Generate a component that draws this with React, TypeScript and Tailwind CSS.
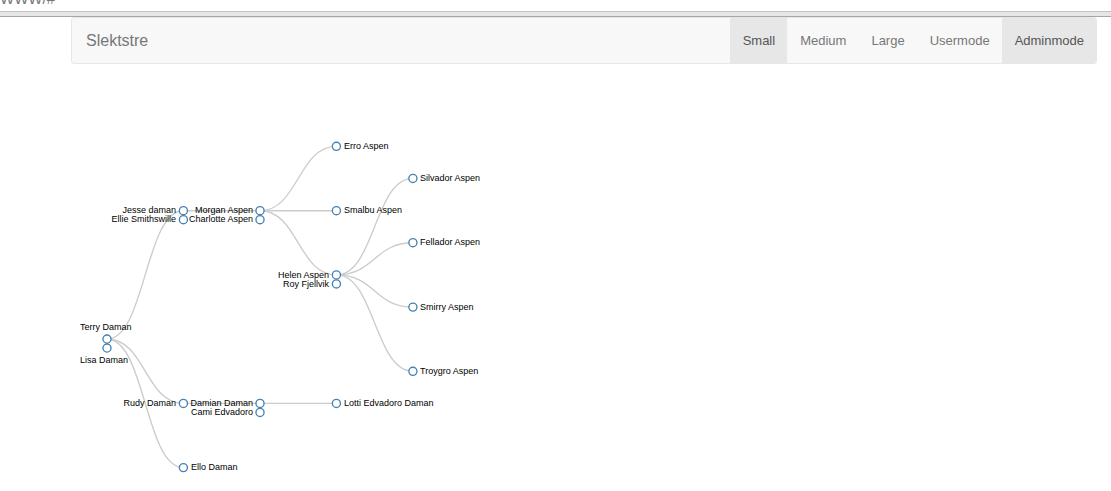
import { useState } from 'react';

type Person = {
  name: string;
  x: number;
  y: number;
  label: 'left' | 'right' | 'above' | 'below';
};

const people: Person[] = [
  { name: 'Terry Daman', x: 107, y: 339, label: 'above' },
  { name: 'Lisa Daman', x: 107, y: 348, label: 'below' },
  { name: 'Jesse daman', x: 183.4, y: 210.7, label: 'left' },
  { name: 'Ellie Smithswille', x: 183.4, y: 219.7, label: 'left' },
  { name: 'Rudy Daman', x: 183.4, y: 403.4, label: 'left' },
  { name: 'Ello Daman', x: 183.4, y: 467.6, label: 'right' },
  { name: 'Morgan Aspen', x: 260, y: 210.7, label: 'left' },
  { name: 'Charlotte Aspen', x: 260, y: 219.7, label: 'left' },
  { name: 'Damian Daman', x: 260, y: 403.4, label: 'left' },
  { name: 'Cami Edvadoro', x: 260, y: 412.4, label: 'left' },
  { name: 'Erro Aspen', x: 336.4, y: 146.3, label: 'right' },
  { name: 'Smalbu Aspen', x: 336.4, y: 210.7, label: 'right' },
  { name: 'Helen Aspen', x: 336.4, y: 274.9, label: 'left' },
  { name: 'Roy Fjellvik', x: 336.4, y: 283.9, label: 'left' },
  { name: 'Lotti Edvadoro Daman', x: 336.4, y: 403.4, label: 'right' },
  { name: 'Silvador Aspen', x: 412.9, y: 178.4, label: 'right' },
  { name: 'Fellador Aspen', x: 412.9, y: 242.7, label: 'right' },
  { name: 'Smirry Aspen', x: 412.9, y: 307.1, label: 'right' },
  { name: 'Troygro Aspen', x: 412.9, y: 371.3, label: 'right' },
];

const links: [string, string][] = [
  ['Terry Daman', 'Jesse daman'],
  ['Terry Daman', 'Rudy Daman'],
  ['Terry Daman', 'Ello Daman'],
  ['Jesse daman', 'Morgan Aspen'],
  ['Rudy Daman', 'Damian Daman'],
  ['Damian Daman', 'Lotti Edvadoro Daman'],
  ['Morgan Aspen', 'Erro Aspen'],
  ['Morgan Aspen', 'Smalbu Aspen'],
  ['Morgan Aspen', 'Helen Aspen'],
  ['Helen Aspen', 'Silvador Aspen'],
  ['Helen Aspen', 'Fellador Aspen'],
  ['Helen Aspen', 'Smirry Aspen'],
  ['Helen Aspen', 'Troygro Aspen'],
];

const labelOffset = {
  left: { dx: -7, dy: 3 },
  right: { dx: 8, dy: 3 },
  above: { dx: -27, dy: -9 },
  below: { dx: -27, dy: 15 },
};

function linkPath(from: string, to: string) {
  const a = people.find((p) => p.name === from)!;
  const b = people.find((p) => p.name === to)!;
  const mid = (a.x + b.x) / 2;
  return `M${a.x},${a.y}C${mid},${a.y} ${mid},${b.y} ${b.x},${b.y}`;
}

function FamilyTree() {
  return (
    <svg
      className="block h-[427px] w-[600px]"
      viewBox="0 64 600 427"
      role="img"
      aria-label="Slektstre"
    >
      {links.map(([from, to]) => (
        <path key={from + to} d={linkPath(from, to)} fill="none" stroke="#ccc" strokeWidth="1.35" />
      ))}
      {people.map((p) => (
        <g key={p.name}>
          <circle cx={p.x} cy={p.y} r="4.05" fill="#fff" stroke="steelblue" strokeWidth="1.35" />
          <text
            x={Math.floor(p.x) + labelOffset[p.label].dx}
            y={Math.floor(p.y + 0.2) + labelOffset[p.label].dy}
            textAnchor={p.label === 'left' ? 'end' : 'start'}
            className="fill-black text-[9px]"
          >
            {p.name}
          </text>
        </g>
      ))}
    </svg>
  );
}

const sizes = ['Small', 'Medium', 'Large'];
const modes = ['Usermode', 'Adminmode'];

export default function App() {
  const [size, setSize] = useState('Small');
  const [mode, setMode] = useState('Adminmode');

  const item = (name: string, active: boolean, select: () => void) => (
    <li key={name} className="flex">
      <button
        type="button"
        aria-pressed={active}
        onClick={select}
        className={
          active
            ? 'bg-[#e7e7e7] pr-[12px] pl-[13px] text-[13px] text-[#555]'
            : 'pr-[12px] pl-[13px] text-[13px] text-[#777] hover:text-[#333]'
        }
      >
        {name}
      </button>
    </li>
  );

  return (
    <div className="overflow-hidden bg-white font-['Liberation_Sans',Arial,sans-serif]">
      <header>
        <div className="flex h-[11px] items-end overflow-hidden text-[15px] leading-[24px] text-[#777]">
          <span>WWW/#</span>
        </div>
        <div className="h-[6px] border-t border-b border-t-[#c4c4c4] border-b-[#a5a5a5] bg-[#e6e6e6]" />
      </header>
      <nav className="mr-[14px] ml-[71px] flex h-[47px] justify-between overflow-hidden rounded-[3px] border border-[#e7e7e7] bg-[#f8f8f8]">
        <a href="#" className="flex items-center px-[14px] text-[16px] text-[#777]">
          Slektstre
        </a>
        <ul className="flex">
          {sizes.map((s) => item(s, s === size, () => setSize(s)))}
          {modes.map((m) => item(m, m === mode, () => setMode(m)))}
        </ul>
      </nav>
      <main>
        <FamilyTree />
      </main>
    </div>
  );
}
